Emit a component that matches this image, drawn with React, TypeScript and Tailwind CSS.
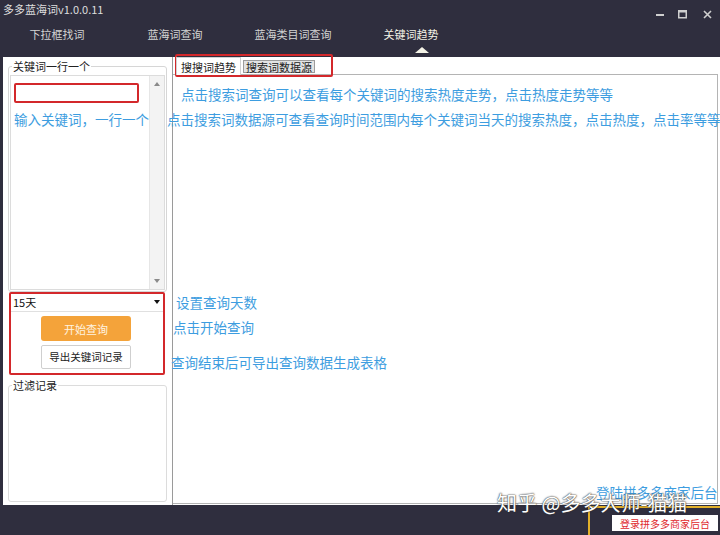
import React from "react";

const navItems = ["下拉框找词", "蓝海词查询", "蓝海类目词查询", "关键词趋势"];

function Note({ className, children }: { className: string; children: React.ReactNode }) {
  return (
    <div
      className={`absolute whitespace-nowrap text-[13.5px] leading-[14px] text-[#3d9de0] ${className}`}
    >
      {children}
    </div>
  );
}

export default function App() {
  return (
    <div className="relative w-[720px] h-[535px] overflow-hidden bg-[#2f2e3e] flex flex-col font-['Noto_Sans_CJK_SC','Noto_Sans',sans-serif]">
      {/* title bar */}
      <div className="h-[22px] flex justify-between pl-[3px] pr-[8px]">
        <span className="mt-[3px] text-[11px] leading-[12px] text-[#dedede]">多多蓝海词v1.0.0.11</span>
        <div className="flex items-start mt-[10px] text-[#cfcfcf]">
          <svg width="9" height="9" viewBox="0 0 9 9" className="mr-[13px]">
            <rect x="0" y="4" width="8" height="2" fill="#cfcfcf" />
          </svg>
          <svg width="9" height="9" viewBox="0 0 9 9" className="mr-[16px]">
            <rect x="0.75" y="0.75" width="7.5" height="7" fill="none" stroke="#cfcfcf" strokeWidth="1.5" />
            <rect x="0" y="0" width="9" height="2.5" fill="#cfcfcf" />
          </svg>
          <svg width="9" height="9" viewBox="0 0 9 9">
            <path d="M1 1 L8 8 M8 1 L1 8" stroke="#cfcfcf" strokeWidth="1.6" />
          </svg>
        </div>
      </div>

      {/* nav */}
      <div className="h-[35px] flex -ml-[2px]">
        {navItems.map((t, i) => (
          <div key={t} className="relative w-[118px] flex justify-center pt-[6px]">
            <span
              className={`text-[11px] leading-[12px] ${i === 3 ? "text-[#f3f2e6]" : "text-[#d4d4d4]"}`}
            >
              {t}
            </span>
            {i === 3 && (
              <div className="absolute top-[25px] left-[63px] w-0 h-0 border-l-[7px] border-r-[7px] border-b-[6px] border-l-transparent border-r-transparent border-b-[#f3f2e6]" />
            )}
          </div>
        ))}
      </div>

      {/* content */}
      <div className="h-[448px] ml-[3px] bg-white flex">
        {/* left column */}
        <div className="w-[169px] px-[5px] pt-[9px] flex flex-col">
          <div className="relative border border-[#d6d6d6] rounded-[3px] px-px pt-[8px] pb-px">
            <span className="absolute -top-[7px] left-[3px] bg-white px-px text-[11px] leading-[12px] text-[#222]">
              关键词一行一个
            </span>
            <div className="h-[215px] border border-[#dcdcdc] flex">
              <div className="flex-1" />
              <div className="w-[15px] bg-[#f3f3f3] border-l border-[#e6e6e6] flex flex-col justify-between items-center py-[6px]">
                <div className="w-0 h-0 border-l-[3px] border-r-[3px] border-b-[4px] border-l-transparent border-r-transparent border-b-[#8a8a8a]" />
                <div className="w-0 h-0 border-l-[3px] border-r-[3px] border-t-[4px] border-l-transparent border-r-transparent border-t-[#8a8a8a]" />
              </div>
            </div>
          </div>

          {/* select */}
          <div className="mt-px mx-[2px] h-[19px] border-b border-[#e0e0e0] flex items-center justify-between pl-[3px] pr-[5px]">
            <span className="text-[11px] leading-[12px] text-[#111]">15天</span>
            <div className="w-0 h-0 border-l-[3px] border-r-[3px] border-t-[4px] border-l-transparent border-r-transparent border-t-[#111]" />
          </div>

          <div className="ml-[33px] mt-[4px] w-[90px] h-[25px] rounded-[3px] bg-[#f4a33a] flex items-center justify-center text-[11px] leading-[12px] text-[#fff3e0]">
            开始查询
          </div>
          <div className="ml-[33px] mt-[4px] w-[90px] h-[24px] rounded-[2px] bg-white border border-[#cfcfcf] flex items-center justify-center text-[10.5px] leading-[12px] text-[#222]">
            导出关键词记录
          </div>

          <div className="relative mt-[16px] h-[117px] border border-[#dcdcdc] rounded-[3px]">
            <span className="absolute -top-[7px] left-[3px] bg-white px-px text-[11px] leading-[12px] text-[#222]">
              过滤记录
            </span>
          </div>
        </div>

        {/* right panel */}
        <div className="flex-1 border-l border-[#9a9a9a] flex flex-col pb-px">
          <div className="h-[17px] flex items-end pl-[3px] gap-[2px] relative z-10">
            <div className="h-[18px] -mb-px px-[4px] bg-white border-l border-t border-r border-[#d0d0d0] flex items-center text-[11px] leading-[12px] text-[#222]">
              搜搜词趋势
            </div>
            <div className="h-[13px] mb-[1px] w-[72px] bg-[#e3e3e3] border border-[#9c9c9c] flex items-center justify-center text-[11px] leading-[12px] text-[#222]">
              搜索词数据源
            </div>
          </div>
          <div className="flex-1 mr-[2px] border-t border-r border-b border-[#b4b4b4]" />
        </div>
      </div>

      {/* bottom bar */}
      <div className="flex-1 flex justify-end items-start pr-[2px]">
        <div className="mt-[10px] w-[106px] h-[16px] bg-white flex items-center justify-center text-[10px] leading-[11px] text-[#e0282c]">
          登录拼多多商家后台
        </div>
      </div>

      {/* annotations */}
      <div className="absolute left-[14px] top-[83px] w-[125px] h-[20px] border-2 border-[#d3282b] rounded-[2px]" />
      <div className="absolute left-[175px] top-[54px] w-[158px] h-[23px] border-2 border-[#d3282b] rounded-[2px]" />
      <div className="absolute left-[9px] top-[292px] w-[156px] h-[83px] border-2 border-[#d3282b] rounded-[2px]" />
      <div className="absolute left-[588px] top-[506px] w-[140px] h-[40px] border-2 border-[#e3b12a]" />

      <Note className="left-[181px] top-[87px]">点击搜索词查询可以查看每个关键词的搜索热度走势，点击热度走势等等</Note>
      <Note className="left-[167px] top-[112px]">点击搜索词数据源可查看查询时间范围内每个关键词当天的搜索热度，点击热度，点击率等等等</Note>
      <Note className="left-[14px] top-[112px]">输入关键词，一行一个</Note>
      <Note className="left-[176px] top-[295px]">设置查询天数</Note>
      <Note className="left-[173px] top-[320px]">点击开始查询</Note>
      <Note className="left-[171px] top-[355px]">查询结束后可导出查询数据生成表格</Note>
      <Note className="left-[596px] top-[485px]">登陆拼多多商家后台</Note>

      <div className="absolute left-[497px] top-[491px] whitespace-nowrap text-[20px] leading-[24px] text-white [text-shadow:0_0_2px_#333,0_0_1px_#333]">
        知乎 @多多大师-猫猫
      </div>
    </div>
  );
}
